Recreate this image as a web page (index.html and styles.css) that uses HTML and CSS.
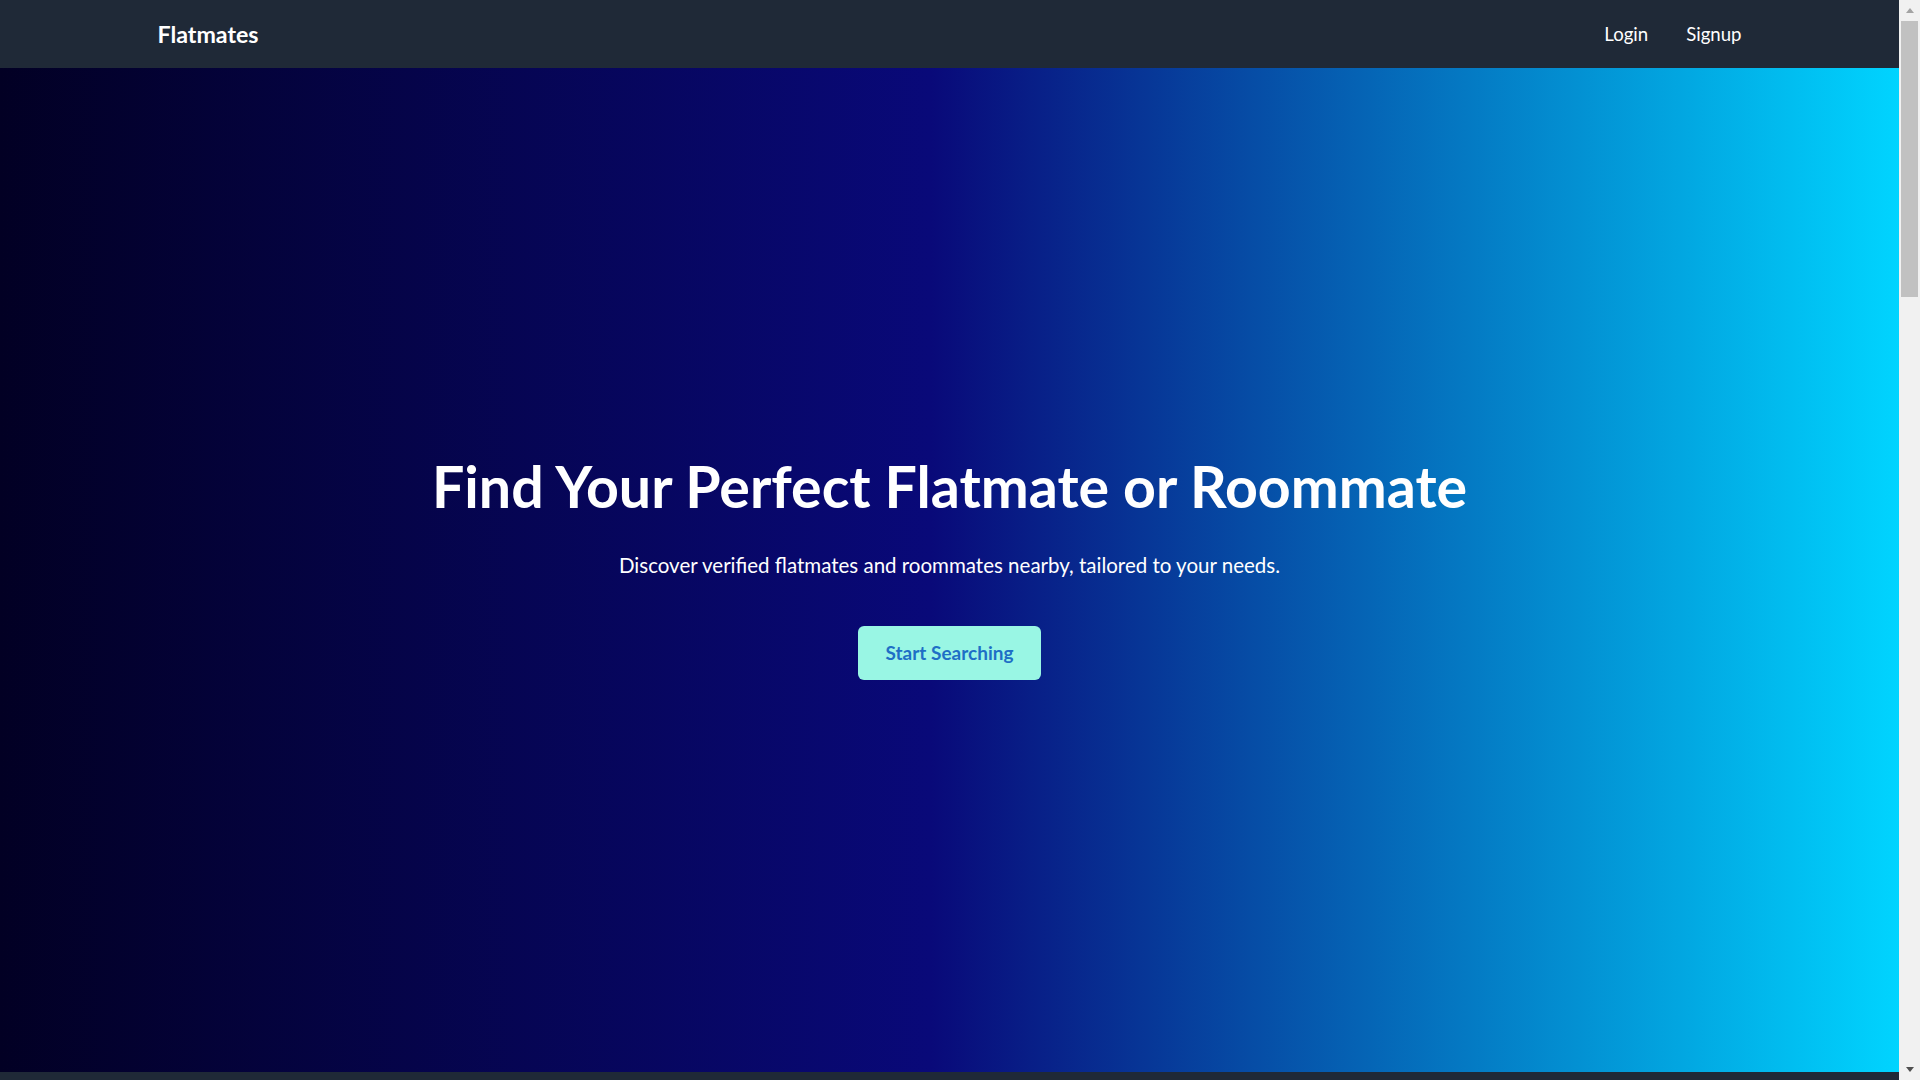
FILE: index.html
```html
<!DOCTYPE html>
<html lang="en">
<head>
<meta charset="utf-8">
<title>Flatmates</title>
<link rel="stylesheet" href="styles.css">
</head>
<body>
<header class="navbar">
  <div class="container nav-inner">
    <a class="brand" href="#">Flatmates</a>
    <nav class="nav-links">
      <a href="#" class="nav-link">Login</a>
      <a href="#" class="nav-link">Signup</a>
    </nav>
  </div>
</header>
<main>
  <section class="hero">
    <h1 class="hero-title">Find Your Perfect Flatmate or Roommate</h1>
    <p class="hero-sub">Discover verified flatmates and roommates nearby, tailored to your needs.</p>
    <a href="#" class="hero-btn">Start Searching</a>
  </section>
  <section class="below"></section>
</main>
<div class="scrollbar" aria-hidden="true">
  <span class="sb-btn"><span class="sb-arrow-up"></span></span>
  <span class="sb-thumb"></span>
  <span class="sb-btn sb-btn-down"><span class="sb-arrow-down"></span></span>
</div>
</body>
</html>
```
FILE: styles.css
```css
html, body {
  margin: 0;
  padding: 0;
}
body {
  font-family: Lato, "Open Sans", sans-serif;
  background: #1f2937;
  color: #ffffff;
  margin-right: 21px;
}
a {
  text-decoration: none;
  color: inherit;
}

.container {
  max-width: 1600px;
  margin: 0 auto;
  padding: 0 8px;
  box-sizing: border-box;
}
.navbar {
  background: #1f2937;
  height: 68px;
}
.nav-inner {
  height: 100%;
  display: flex;
  align-items: center;
  justify-content: space-between;
}
.brand {
  font-size: 23.2px;
  font-weight: 700;
  color: #ffffff;
}
.nav-links {
  display: flex;
  gap: 38px;
}
.nav-link {
  font-size: 18.6px;
  color: #ffffff;
}

.hero {
  height: 1004px;
  box-sizing: border-box;
  padding-bottom: 4px;
  background: linear-gradient(90deg, #020024 0%, #090979 49%, #00d4ff 100%);
  display: flex;
  flex-direction: column;
  align-items: center;
  justify-content: center;
  text-align: center;
}
.hero-title {
  margin: 0 0 35px;
  font-size: 57.3px;
  line-height: 60px;
  font-weight: 700;
  color: #ffffff;
}
.hero-sub {
  margin: 0 0 47px;
  font-size: 20.5px;
  line-height: 28px;
  color: #ffffff;
}
.hero-btn {
  display: inline-block;
  background: #99f6e4;
  color: #1e6fc6;
  font-size: 19px;
  font-weight: 700;
  line-height: 30px;
  padding: 12px 28px;
  border-radius: 6px;
}
.below {
  height: 2988px;
  background: #1f2937;
}

.scrollbar {
  position: fixed;
  top: 0;
  right: 0;
  width: 21px;
  height: 100vh;
  background: #f1f1f1;
  display: flex;
  flex-direction: column;
}
.sb-btn {
  height: 21px;
  display: flex;
  align-items: center;
  justify-content: center;
}
.sb-btn-down {
  margin-top: auto;
}
.sb-arrow-up {
  width: 0;
  height: 0;
  border-left: 4.5px solid transparent;
  border-right: 4.5px solid transparent;
  border-bottom: 5px solid #a3a3a3;
}
.sb-arrow-down {
  width: 0;
  height: 0;
  border-left: 4.5px solid transparent;
  border-right: 4.5px solid transparent;
  border-top: 5px solid #505050;
}
.sb-thumb {
  height: 276px;
  margin: 0 2px;
  background: #c1c1c1;
}
```
